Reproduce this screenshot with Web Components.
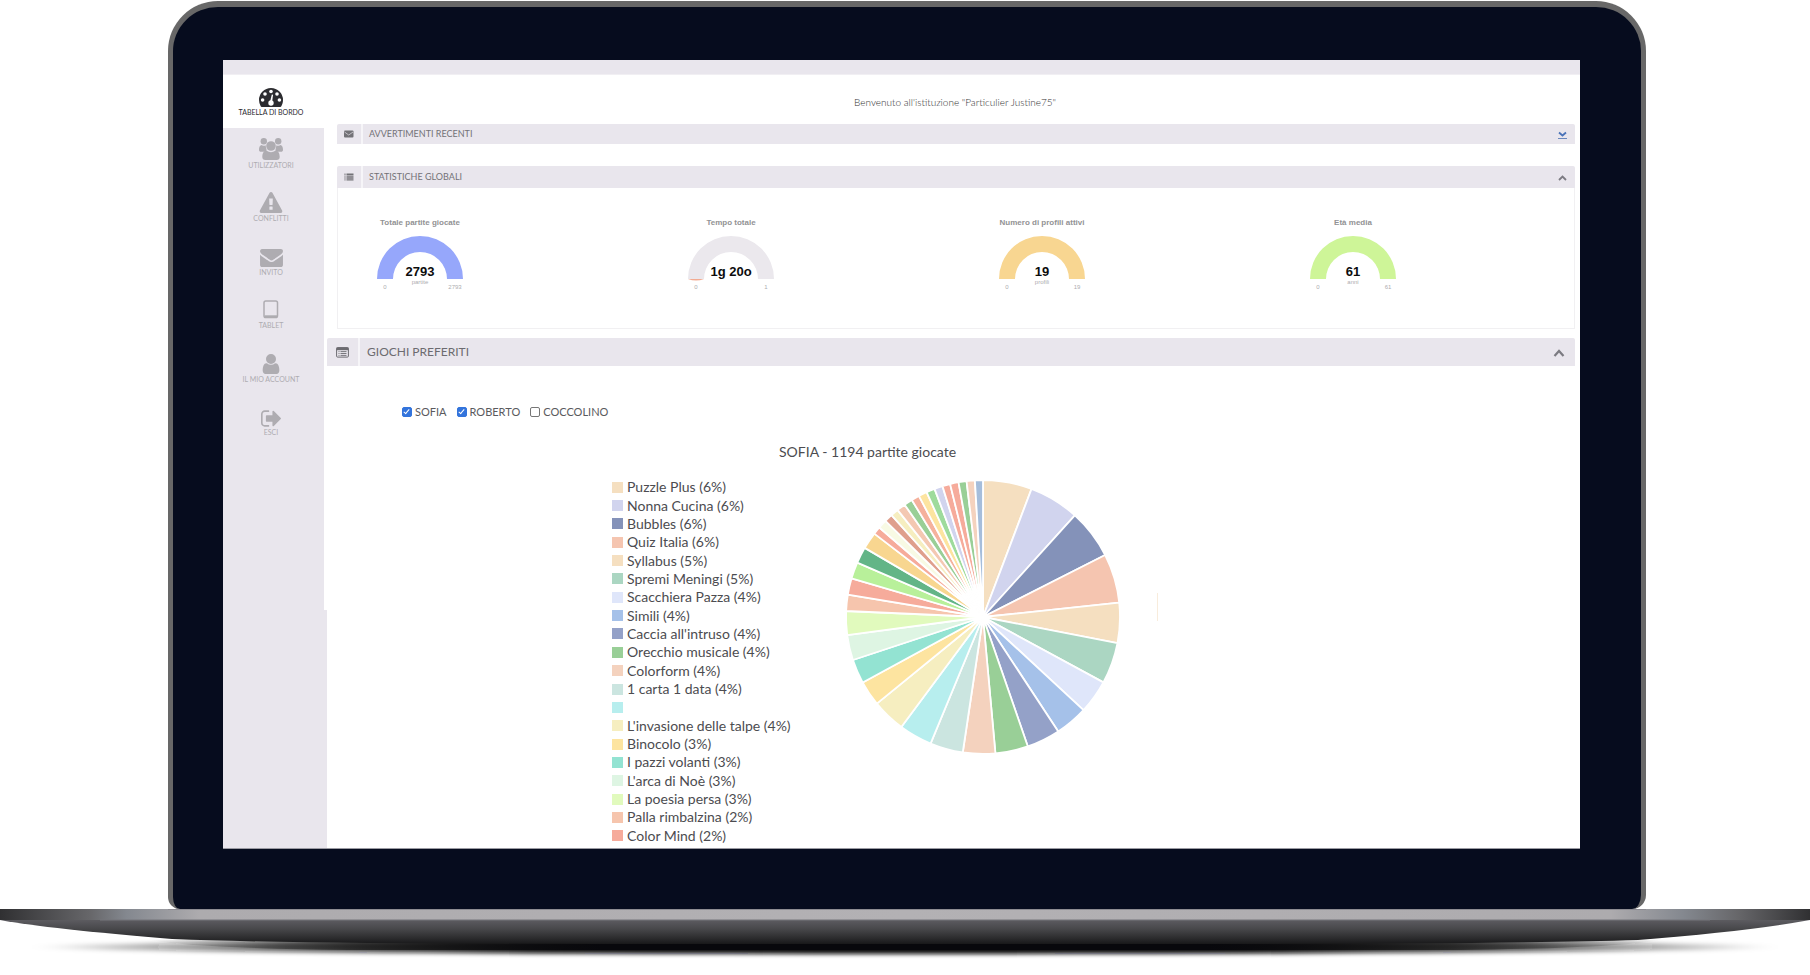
<!DOCTYPE html>
<html lang="it">
<head>
<meta charset="utf-8">
<title>Tabella di bordo</title>
<style>
  body { margin: 0; background: #fff; font-family: "Century Gothic", Lato, sans-serif; color: #4c4c50; }
</style>
</head>
<body>
<laptop-frame>
  <dash-board></dash-board>
</laptop-frame>

<script>
const define = (name, html, setup) => customElements.define(name, class extends HTMLElement {
  connectedCallback() {
    if (this.shadowRoot) return;
    const root = this.attachShadow({ mode: "open" });
    root.innerHTML = typeof html === "function" ? html(this) : html;
    if (setup) setup(root, this);
  }
});

const ICONS = {
  dashboard: `<svg viewBox="0 0 24 19" width="24" height="19"><path fill="currentColor" d="M12 0a12 12 0 0 1 12 12c0 2.300-.6 4.400-1.700 6.200-.2.400-.6.700-1.100.7H2.800c-.5 0-.9-.3-1.100-.7A12 12 0 0 1 0 12 12 12 0 0 1 12 0z"/><g fill="#fff"><circle cx="3.600" cy="12" r="1.800"/><circle cx="6" cy="6" r="1.800"/><circle cx="12" cy="3.500" r="1.800"/><circle cx="18" cy="6" r="1.800"/><circle cx="20.400" cy="12" r="1.800"/><circle cx="12" cy="15" r="2.700"/><path d="M11 14l1.800-7.500 1.300.3L13 14.500z"/></g></svg>`,
  users: `<svg viewBox="0 0 24 22" width="24" height="22" fill="currentColor"><circle cx="4.800" cy="3.200" r="3.200"/><circle cx="19.200" cy="3.200" r="3.200"/><path d="M2.300 7C.6 7.600 0 9.500 0 12c0 1.200.8 1.800 2 1.800h4.500C7.500 12.700 8 12.200 7 9.500L6.600 7.200C5 8 3.800 7.800 2.300 7zM21.700 7c1.700.6 2.300 2.500 2.300 5 0 1.200-.8 1.800-2 1.800h-4.500C16.500 12.700 16 12.200 17 9.500l.4-2.300c1.600.8 2.800.6 4.300-.2z"/><circle cx="12" cy="8" r="4.800"/><path d="M7.600 12.600C4.500 12.800 3.300 15.500 3.300 19c0 2 1.200 3 3 3h11.400c1.800 0 3-1 3-3 0-3.500-1.200-6.200-4.300-6.400-2.800 2.200-6 2.200-8.800 0z"/></svg>`,
  warning: `<svg viewBox="0 0 1792 1664" width="24" height="21"><path fill="currentColor" d="M1024 1375v-190q0-14-9.500-23.500t-22.500-9.500h-192q-13 0-22.500 9.500t-9.500 23.500v190q0 14 9.500 23.500t22.500 9.500h192q13 0 22.500-9.500t9.500-23.500zm-2-374l18-459q0-12-10-19-13-11-24-11h-220q-11 0-24 11-10 7-10 21l17 457q0 10 10 16.500t24 6.500h185q14 0 23.500-6.500t10.500-16.500zm-14-934l768 1408q35 63-2 126-17 29-46.500 46t-63.500 17h-1536q-34 0-63.500-17t-46.500-46q-37-63-2-126l768-1408q17-31 47-49t65-18 65 18 47 49z"/></svg>`,
  envelope: `<svg viewBox="0 256 1792 1408" width="23" height="18"><path fill="currentColor" d="M1792 710v794q0 66-47 113t-113 47h-1472q-66 0-113-47t-47-113v-794q44 49 101 87 362 246 497 345 57 42 92.500 65.500t94.500 48 110 24.500h2q51 0 110-24.500t94.500-48 92.500-65.500q170-123 498-345 57-39 100-87zm0-294q0 79-49 151t-122 123q-376 261-468 325-10 7-42.500 31t-54 38.500-52 32.500-57.500 27-50 9h-2q-23 0-50-9t-57.500-27-52-32.500-54-38.500-42.500-31q-91-64-262-182.500t-205-142.500q-62-42-117-115.500t-55-136.500q0-78 41.500-130t118.500-52h1472q65 0 112.500 47t47.500 113z"/></svg>`,
  tablet: `<svg viewBox="0 0 16 20" width="16" height="20"><rect x="1" y="1" width="13.500" height="16.500" rx="1.800" fill="none" stroke="currentColor" stroke-width="1.500"/><path stroke="currentColor" stroke-width="1.800" d="M1.500 16.200h12.500"/></svg>`,
  user: `<svg viewBox="256 128 1280 1536" width="18" height="20"><path fill="currentColor" d="M1536 1399q0 109-62.500 187t-150.500 78h-854q-88 0-150.500-78t-62.500-187q0-85 8.500-160.500t31.500-152 58.500-131 94-89 134.500-34.500q131 128 313 128t313-128q76 0 134.500 34.500t94 89 58.500 131 31.500 152 8.500 160.500zm-256-887q0 159-112.500 271.500t-271.500 112.500-271.500-112.500-112.500-271.500 112.500-271.500 271.500-112.500 271.500 112.500 112.500 271.500z"/></svg>`,
  exit: `<svg viewBox="64 256 1568 1280" width="20" height="17"><path fill="currentColor" d="M704 1440q0 4 1 20t.5 26.500-3 23.500-10 19.500-20.500 6.500h-320q-119 0-203.500-84.500t-84.500-203.500v-704q0-119 84.500-203.500t203.500-84.500h320q13 0 22.500 9.500t9.500 22.500q0 4 1 20t.5 26.500-3 23.500-10 19.500-20.500 6.500h-320q-66 0-113 47t-47 113v704q0 66 47 113t113 47h312l11.500 1 11.500 3 8 5.500 7 9 2 13.500zm928-544q0 26-19 45l-544 544q-19 19-45 19t-45-19-19-45v-288h-448q-26 0-45-19t-19-45v-384q0-26 19-45t45-19h448v-288q0-26 19-45t45-19 45 19l544 544q19 19 19 45z"/></svg>`,
  mail: `<svg viewBox="0 0 10 8" width="10" height="8"><rect y=".5" width="9.500" height="7" rx="1" fill="currentColor"/><path d="M.5 2l4.200 3L9 2" fill="none" stroke="#d5d3d9" stroke-width=".8"/></svg>`,
  list: `<svg viewBox="0 0 10 8" width="10" height="8" fill="currentColor"><path d="M2.500.5h7v1.400h-7zM2.500 2.400h7v1.400h-7zM2.500 4.300h7v1.400h-7zM2.500 6.200h7v1.400h-7z"/><path opacity=".7" d="M.3.5h1.400v1.400H.3zM.3 2.400h1.400v1.400H.3zM.3 4.300h1.400v1.400H.3zM.3 6.200h1.400v1.400H.3z"/></svg>`,
  table: `<svg viewBox="0 0 13 11" width="13" height="11"><rect x=".6" y=".6" width="11.800" height="9.500" rx="1" fill="none" stroke="currentColor" stroke-width="1"/><path fill="currentColor" d="M.5.5h12v2.700H.5z"/><path stroke="currentColor" d="M2.500 4.600h1M4.500 4.600h6M2.500 6.500h1M4.500 6.500h6M2.500 8.400h1M4.500 8.400h6" stroke-width=".9"/></svg>`
};

define("laptop-frame", `
<style>
  :host { display: block; padding-top: 1px; }
  .lid { margin: 0 164px 0 168px; padding: 53px 61px 60px 50px; background: #060c1e; border: 5px solid #686868; border-top-width: 6px; border-bottom: 0; border-radius: 50px 50px 14px 12px; }
  svg { display: block; width: 100%; height: 66px; }
</style>
<div class="lid"><slot></slot></div>
<svg viewBox="0 0 1810 66" preserveAspectRatio="none" aria-hidden="true">
  <defs>
    <linearGradient id="edge">
      <stop offset="0" stop-color="#303032"/><stop offset=".05" stop-color="#67676a"/><stop offset=".07" stop-color="#84888f"/><stop offset=".11" stop-color="#adabae"/>
      <stop offset=".5" stop-color="#b3b1b4"/>
      <stop offset=".89" stop-color="#adabae"/><stop offset=".93" stop-color="#84888f"/><stop offset=".96" stop-color="#67676a"/><stop offset="1" stop-color="#303032"/>
    </linearGradient>
    <linearGradient id="hull" x2="0" y2="1"><stop offset="0" stop-color="#5c5b60"/><stop offset=".35" stop-color="#49494c"/><stop offset=".75" stop-color="#2c2c2e"/><stop offset="1" stop-color="#181819"/></linearGradient>
    <linearGradient id="fade"><stop offset="0" stop-color="#111" stop-opacity="0"/><stop offset=".14" stop-color="#111" stop-opacity=".65"/><stop offset=".3" stop-color="#08080c"/><stop offset=".7" stop-color="#08080c"/><stop offset=".86" stop-color="#111" stop-opacity=".65"/><stop offset="1" stop-color="#111" stop-opacity="0"/></linearGradient>
    <filter id="soft" x="-5%" y="-100%" width="110%" height="300%"><feGaussianBlur stdDeviation="10 2"/></filter>
  </defs>
  <ellipse cx="905" cy="38" rx="870" ry="7" fill="url(#fade)" filter="url(#soft)"/>
  <path fill="url(#fade)" d="M150 31h1510q-40 8-200 10H350q-160-2-200-10z"/>
  <path fill="url(#hull)" d="M0 11Q50 20 172 30Q300 35 600 35H1210Q1510 35 1638 31Q1750 22 1810 11z"/>
  <path fill="url(#edge)" d="M0 0h1810v11H0z"/>
  <path fill="#75747a" d="M100 10.500h1610v1H100z"/>
  <path fill="#8d8c92" d="M168 0h1478v1H168z"/>
</svg>`);

define("dash-board", `
<style>
  :host { display: grid; grid-template: 15px 773px / 104px 1fr; background: #fff; border-bottom: 1px solid #9b9ba3; }
  .strip { grid-column: 1 / -1; background: #e9e6ed; border-bottom: 1px solid #f1eff3; box-sizing: border-box; }
  main { min-width: 0; padding: 0 5px 0 0; }
  .welcome { margin: 0 0 0 8px; padding-top: 21px; height: 28px; font-size: 10px; font-weight: 300; color: #333; line-height: 12px; text-align: center; }
  .inset { margin-left: 10px; }
  .gap { height: 22px; }
  .stats { display: flex; justify-content: space-between; padding: 29px 139px 37px 0; }
  .spacer { height: 9px; }
  .choices { display: flex; gap: 10px; padding: 39px 0 0 75px; }
  h2 { margin: 24px 0 0; padding-left: 452px; font-size: 14px; line-height: 18px; font-weight: 400; }
  .chart { display: flex; padding: 17px 0 0 285px; }
  .mark { align-self: flex-start; margin: 115px 0 0 35px; width: 1px; height: 28px; background: #f8ecdc; }
</style>
<div class="strip"></div>
<side-nav></side-nav>
<main>
  <p class="welcome">Benvenuto all'istituzione "Particulier Justine75"</p>
  <dash-panel class="inset" icon="mail" label="AVVERTIMENTI RECENTI" closed></dash-panel>
  <div class="gap"></div>
  <dash-panel class="inset" icon="list" label="STATISTICHE GLOBALI" framed>
    <div class="stats">
      <stat-gauge label="Totale partite giocate" value="2793" unit="partite" max="2793" color="#96a7fb"></stat-gauge>
      <stat-gauge label="Tempo totale" value="1g 20o" unit="" max="1" color="#ebe8ed" started></stat-gauge>
      <stat-gauge label="Numero di profili attivi" value="19" unit="profili" max="19" color="#f8d691"></stat-gauge>
      <stat-gauge label="Età media" value="61" unit="anni" max="61" color="#cef598"></stat-gauge>
    </div>
  </dash-panel>
  <div class="spacer"></div>
  <dash-panel icon="table" label="GIOCHI PREFERITI" large>
    <div class="choices">
      <check-item name="SOFIA" checked></check-item>
      <check-item name="ROBERTO" checked></check-item>
      <check-item name="COCCOLINO"></check-item>
    </div>
    <h2>SOFIA - 1194 partite giocate</h2>
    <div class="chart">
      <game-legend></game-legend>
      <game-pie></game-pie>
      <span class="mark"></span>
    </div>
  </dash-panel>
</main>`);

define("side-nav", () => {
  const items = [["users", "UTILIZZATORI"], ["warning", "CONFLITTI"], ["envelope", "INVITO"], ["tablet", "TABLET"], ["user", "IL MIO ACCOUNT"], ["exit", "ESCI"]];
  const link = ([icon, text]) => `<a href="#${icon}">${ICONS[icon]}<span>${text}</span></a>`;
  return `
<style>
  :host { display: flex; flex-direction: column; }
  a { display: flex; flex-direction: column; align-items: center; justify-content: flex-end; box-sizing: border-box; padding: 0 8px 12px 0; color: #aeacb1; text-decoration: none; font-size: 7px; line-height: 10px; white-space: nowrap; }
  svg { display: block; }
  .active { height: 53px; padding-bottom: 11px; color: #2c2c30; }
  nav { flex: 1; background: linear-gradient(#e9e6ed, #e9e6ed) 0 0 / 101px 100% no-repeat, linear-gradient(#e9e6ed, #e9e6ed) 0 100% / 104px 238px no-repeat; }
  .list { display: grid; grid-template-rows: repeat(6, 1fr); height: 321px; }
</style>
<a class="active" href="#dashboard">${ICONS.dashboard}<span>TABELLA DI BORDO</span></a>
<nav><div class="list">${items.map(link).join("")}</div></nav>`;
});

define("dash-panel", el => {
  const closed = el.hasAttribute("closed");
  return `
<style>
  :host { display: block; }
  header { display: flex; align-items: center; height: 20px; background: #e9e6ed; border-radius: 2px 2px 0 0; color: #737277; }
  :host([framed]) header { height: 22px; }
  :host([large]) header { height: 28px; color: #6c6b70; }
  .icon { display: flex; align-items: center; justify-content: center; align-self: stretch; width: 24px; border-right: 2px solid #f6f5f8; }
  :host([large]) .icon { width: 31px; }
  h1 { flex: 1; margin: 0 0 0 6px; font-size: 9px; line-height: 14px; font-weight: 400; }
  :host([large]) h1 { margin-left: 7px; font-size: 12px; line-height: 18px; }
  button { display: block; margin: 2px 8px 0 0; padding: 0; border: 0; background: none; color: #7c7b82; }
  button svg { display: block; }
  :host([closed]) button { color: #6a88bd; }
  :host([large]) button { margin-right: 10px; }
  :host([framed]) .body { border: 1px solid #f1f0f2; border-top: 0; }
</style>
<section>
  <header><span class="icon">${ICONS[el.getAttribute("icon")]}</span><h1>${el.getAttribute("label")}</h1>
  <button type="button" aria-label="${closed ? "Apri" : "Chiudi"}">${closed
    ? `<svg width="9" height="8" viewBox="0 0 9 8"><path d="M1 1.500l3.500 3 3.500-3" fill="none" stroke="#4a73b8" stroke-width="1.800"/><path d="M0 7.500h9" stroke="currentColor"/></svg>`
    : el.hasAttribute("large")
      ? `<svg width="12" height="8" viewBox="0 0 12 8"><path d="M1.500 7L6 2l4.500 5" fill="none" stroke="currentColor" stroke-width="2.200"/></svg>`
      : `<svg width="9" height="6" viewBox="0 0 9 6"><path d="M1 5l3.500-3.500L8 5" fill="none" stroke="currentColor" stroke-width="1.800"/></svg>`}</button></header>
  <div class="body"><slot></slot></div>
</section>`;
});

define("stat-gauge", el => `
<style>
  :host { display: flex; flex-direction: column; align-items: center; width: 164px; font-family: "Liberation Sans", Arial, sans-serif; }
  h3 { margin: 0 0 7px; font-size: 8px; line-height: 12px; color: #929294; white-space: nowrap; }
  .dial { display: grid; justify-items: center; }
  .dial > * { grid-area: 1 / 1; }
  svg { display: block; }
  .read { align-self: end; display: flex; flex-direction: column; align-items: center; }
  b { font-size: 13px; line-height: 14px; color: #0c0c0c; }
  small, .ends { font-size: 6px; line-height: 7px; color: #adadb0; }
  small { height: 7px; }
  .ends { display: flex; justify-content: space-between; width: 86px; margin-top: -2px; }
  .ends span { width: 16px; text-align: center; }
</style>
<h3>${el.getAttribute("label")}</h3>
<div class="dial">
  <svg width="86" height="50" viewBox="0 0 86 50" aria-hidden="true"><path fill="${el.getAttribute("color")}" d="M0 43a43 43 0 0 1 86 0H70a27 27 0 0 0-54 0z"/>${el.hasAttribute("started") ? '<path fill="#f2ab92" d="M0 43h16q-8 3-16 0z"/>' : ""}</svg>
  <div class="read"><b>${el.getAttribute("value")}</b><small>${el.getAttribute("unit")}</small></div>
</div>
<div class="ends"><span>0</span><span>${el.getAttribute("max")}</span></div>`);

define("check-item", el => `
<style>
  :host { display: block; }
  label { display: flex; align-items: center; gap: 3px; font-size: 11px; line-height: 14px; color: #5a5a5e; }
  input { appearance: none; box-sizing: border-box; width: 10px; height: 10px; margin: 0; border: 1px solid #767676; border-radius: 2px; background: #fff; }
  input:checked { border-color: #3374dc; background: #3374dc; display: grid; }
  input:checked::before { content: ""; width: 2px; height: 5px; margin: 0 0 0 2px; border: solid #fff; border-width: 0 1px 1px 0; transform: rotate(40deg); }
</style>
<label><input type="checkbox"${el.hasAttribute("checked") ? " checked" : ""}>${el.getAttribute("name")}</label>`);

const GAMES = [
  ["#f5dfc0", 20.75, "Puzzle Plus (6%)"], ["#d1d4ee", 42.1, "Nonna Cucina (6%)"], ["#8492b9", 63.1, "Bubbles (6%)"],
  ["#f5c5b0", 84, "Quiz Italia (6%)"], ["#f5dfc0", 101, "Syllabus (5%)"], ["#abd6c2", 118.5, "Spremi Meningi (5%)"],
  ["#dfe6fa", 132.8, "Scacchiera Pazza (4%)"], ["#a5c1e9", 146.7, "Simili (4%)"], ["#94a1c8", 160.9, "Caccia all'intruso (4%)"],
  ["#99cf97", 174.8, "Orecchio musicale (4%)"], ["#f4d2be", 188.5, "Colorform (4%)"], ["#cbe5e0", 202.5, "1 carta 1 data (4%)"],
  ["#b7eeee", 216.6, ""], ["#f6eec0", 230.8, "L'invasione delle talpe (4%)"], ["#fde4a0", 241.4, "Binocolo (3%)"],
  ["#93e3d2", 251.7, "I pazzi volanti (3%)"], ["#def5e3", 262.4, "L'arca di Noè (3%)"], ["#e1fabd", 272.5, "La poesia persa (3%)"],
  ["#f6c5ad", 279.4, "Palla rimbalzina (2%)"], ["#f6ab9b", 286.4, "Color Mind (2%)"],
  ["#b8f09a", 293.4], ["#63b587", 300.3], ["#f8d690", 307.5], ["#f6ab9b", 310.8], ["#f8fae4", 314.6], ["#df9f8d", 318.1],
  ["#f6eec0", 321.4], ["#f4c8b2", 325.1], ["#99cf97", 328.7], ["#f5b19c", 332.1], ["#fde4a0", 335.7], ["#9edb9c", 339.3],
  ["#d1d4ee", 342.8], ["#f6ab9b", 346.1], ["#f6ab9b", 349.7], ["#99cf97", 353.1], ["#f4d2be", 356.6], ["#a5bddb", 360]
];

define("game-legend", () => `
<style>
  :host { display: block; width: 232px; }
  ul { display: grid; grid-auto-rows: 1fr; height: 367px; margin: 0; padding: 0; list-style: none; font-size: 14px; line-height: 18px; }
  li { display: flex; align-items: center; gap: 4px; min-height: 0; white-space: nowrap; }
  i { width: 11px; height: 11px; }
</style>
<ul>${GAMES.filter(g => g.length > 2).map(([c, , t]) => `<li><i style="background:${c}"></i>${t}</li>`).join("")}</ul>`);

define("game-pie", () => {
  const at = a => [139 + 137 * Math.sin(a * Math.PI / 180), 139 - 137 * Math.cos(a * Math.PI / 180)].map(n => n.toFixed(2)).join(" ");
  let from = 0;
  const slices = GAMES.map(([c, to]) => {
    const d = `M139 139L${at(from)}A137 137 0 0 1 ${at(to)}z`;
    from = to;
    return `<path fill="${c}" d="${d}"/>`;
  });
  return `
<style>:host { display: block; } svg { display: block; }</style>
<svg width="278" height="278" viewBox="0 0 278 278" stroke="#fff" stroke-width="1.800" stroke-linejoin="bevel" role="img" aria-label="Giochi preferiti">${slices.join("")}</svg>`;
});
</script>
</body>
</html>
